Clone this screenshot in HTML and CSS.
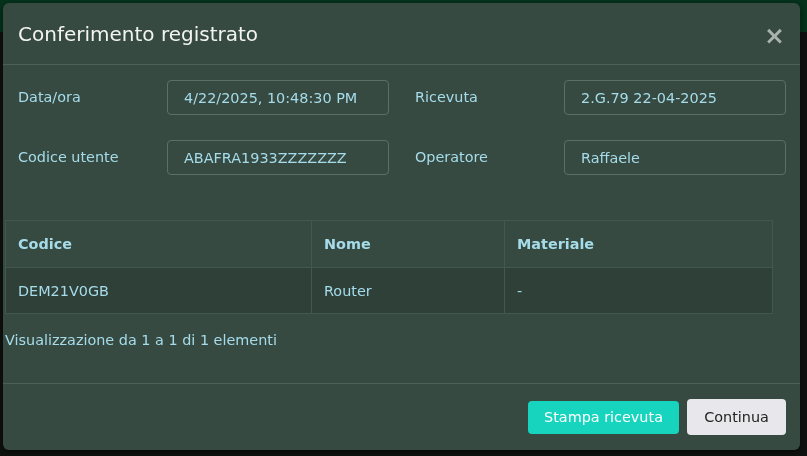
FILE: index.html
```html
<!DOCTYPE html>
<html lang="it">
<head>
<meta charset="utf-8">
<title>Conferimento registrato</title>
<link rel="stylesheet" href="styles.css">
</head>
<body>
<div class="topbar"></div>
<div class="backdrop"></div>
<div class="modal">
  <div class="modal-header">
    <h2 class="modal-title">Conferimento registrato</h2>
    <span class="close">&times;</span>
  </div>
  <div class="modal-body">
    <div class="form-grid">
      <label class="lbl">Data/ora</label>
      <div class="field">4/22/2025, 10:48:30 PM</div>
      <label class="lbl lbl-second">Ricevuta</label>
      <div class="field">2.G.79 22-04-2025</div>
      <label class="lbl">Codice utente</label>
      <div class="field">ABAFRA1933ZZZZZZZ</div>
      <label class="lbl lbl-second">Operatore</label>
      <div class="field">Raffaele</div>
    </div>
    <table class="items">
      <thead>
        <tr><th class="c1">Codice</th><th class="c2">Nome</th><th class="c3">Materiale</th></tr>
      </thead>
      <tbody>
        <tr><td>DEM21V0GB</td><td>Router</td><td>-</td></tr>
      </tbody>
    </table>
    <div class="info">Visualizzazione da 1 a 1 di 1 elementi</div>
  </div>
  <div class="modal-footer">
    <button class="btn btn-primary">Stampa ricevuta</button>
    <button class="btn btn-light">Continua</button>
  </div>
</div>
</body>
</html>
```
FILE: styles.css
```css
html, body {
  margin: 0;
  padding: 0;
  height: 100%;
}
body {
  background: #111412;
  font-family: "DejaVu Sans", sans-serif;
  overflow: hidden;
}
.topbar {
  height: 32px;
  background: #053b20;
}
.backdrop {
  position: fixed;
  inset: 0;
  background: rgba(0, 0, 0, 0.15);
}
.modal {
  position: fixed;
  left: 3px;
  top: 3px;
  width: 797px;
  height: 447px;
  background: #364a41;
  border-radius: 6px;
  box-shadow: 0 2px 6px rgba(0,0,0,0.5);
  display: flex;
  flex-direction: column;
  box-sizing: border-box;
}
.modal-header {
  height: 62px;
  box-sizing: border-box;
  border-bottom: 1px solid #4d6157;
  display: flex;
  align-items: center;
  justify-content: space-between;
  padding: 0 14px 0 15px;
}
.modal-title {
  margin: 0;
  font-size: 20px;
  font-weight: normal;
  color: #f2f4f3;
}
.close {
  font-size: 25px;
  font-weight: bold;
  color: #a9b3ae;
  line-height: 1;
  margin-top: 4px;
  margin-right: 1px;
}
.modal-body {
  flex: 1;
  padding: 15px 0 0 0;
}
.form-grid {
  display: grid;
  grid-template-columns: 149px 222px 175px 222px;
  row-gap: 25px;
  align-items: center;
  padding-left: 15px;
}
.lbl {
  font-size: 14.4px;
  color: #a6dcea;
  margin-top: -1px;
}
.lbl-second {
  padding-left: 26px;
}
.field {
  height: 35px;
  box-sizing: border-box;
  border: 1px solid #5a6f66;
  border-radius: 4px;
  padding: 0 16px;
  display: flex;
  align-items: center;
  font-size: 14.4px;
  color: #a6dcea;
}
.items {
  margin: 45px 0 0 2px;
  width: 768px;
  border-collapse: collapse;
  font-size: 14.4px;
  color: #a6dcea;
}
.items th, .items td {
  text-align: left;
  border: 1px solid #43574e;
  padding: 0 12px;
}
.items th {
  height: 46px;
  font-weight: bold;
}
.items td {
  height: 45px;
  background: #2f4039;
}
.items .c1 { width: 281px; }
.items .c2 { width: 168px; }
.info {
  margin: 18px 0 0 2px;
  font-size: 14.4px;
  color: #a6dcea;
}
.modal-footer {
  height: 67px;
  box-sizing: border-box;
  border-top: 1px solid #4d6157;
  display: flex;
  align-items: center;
  justify-content: flex-end;
  gap: 8px;
  padding: 0 14px 0 0;
}
.btn {
  font-family: "DejaVu Sans", sans-serif;
  font-size: 14.4px;
  border: none;
  border-radius: 4px;
  cursor: pointer;
}
.btn-primary {
  background: #17d4be;
  color: #ffffff;
  width: 151px;
  height: 33px;
}
.btn-light {
  background: #e8e8ec;
  color: #222222;
  width: 99px;
  height: 36px;
}
```
